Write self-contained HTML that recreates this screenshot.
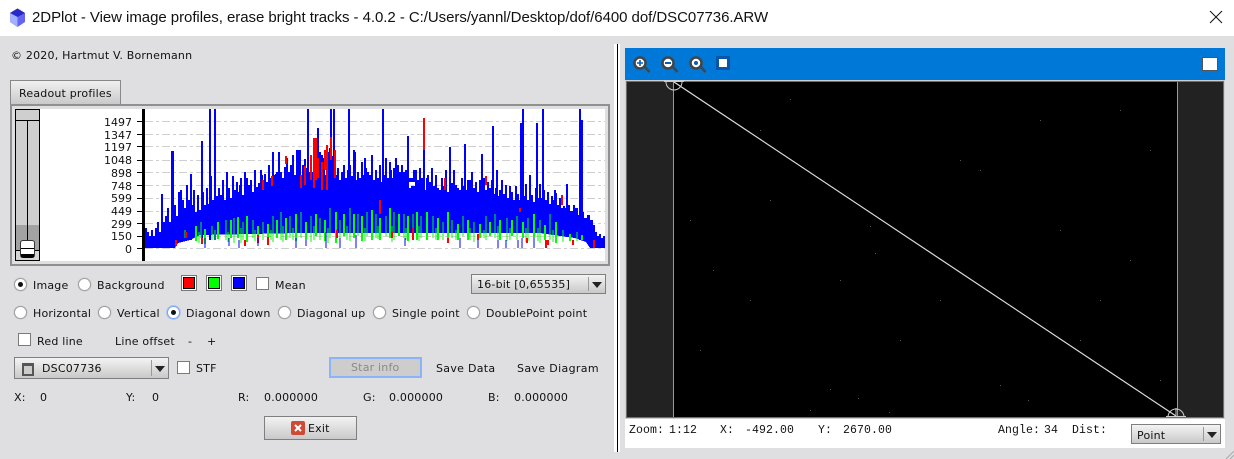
<!DOCTYPE html>
<html><head><meta charset="utf-8"><style>
html,body{margin:0;padding:0}
body{width:1234px;height:459px;overflow:hidden;background:#dfdfe1;position:relative;font-family:"DejaVu Sans","Liberation Sans",sans-serif;font-size:11px;color:#111}
.a{position:absolute;white-space:nowrap}
.t{position:absolute;white-space:nowrap;line-height:14px;letter-spacing:.2px}
.r{position:absolute;width:11px;height:11px;border-radius:50%;background:#fff;border:1px solid #a0a0a0;box-shadow:0 0 1px #999}
.r.on:after{content:"";position:absolute;left:3px;top:3px;width:5px;height:5px;border-radius:50%;background:#111}
.c{position:absolute;width:11px;height:11px;background:#fff;border:1px solid #7a7a7a}
.s{position:absolute;width:12px;height:12px;background:#fff;border:1px solid #777;padding:1px}
.s i{display:block;width:10px;height:10px;border:1px solid #000}
.g{position:absolute;box-sizing:border-box;border:1px solid #7f7f7f;background:linear-gradient(#f3f3f3,#c9c9c9)}
.ar{position:absolute;width:0;height:0;border-left:5px solid transparent;border-right:5px solid transparent;border-top:6px solid #222}
.m{position:absolute;white-space:nowrap;top:424px;font:11.5px/14px 'Liberation Mono',monospace;color:#111;letter-spacing:.1px}
</style></head><body>
<div class="a" style="left:0;top:0;width:1234px;height:36px;background:#fff"></div>
<svg class="a" style="left:9px;top:8px" width="17" height="20" viewBox="0 0 17 20"><polygon points="8.500,0.500 16,5 16,14 8.500,19 1,14 1,5" fill="#6464f0"/><polygon points="8.500,0.500 16,5 8.500,9 1,5" fill="#2828c8"/><polygon points="1,5 8.500,9 8.500,19 1,14" fill="#a2aeff"/></svg>
<div class="a" style="left:32px;top:8px;font:15px/20px 'Liberation Sans',sans-serif;letter-spacing:-.05px;color:#111">2DPlot - View image profiles, erase bright tracks - 4.0.2 - C:/Users/yannl/Desktop/dof/6400 dof/DSC07736.ARW</div>
<svg class="a" style="left:1209px;top:10px" width="14" height="14"><path d="M1 1L13 13M13 1L1 13" stroke="#111" stroke-width="1"/></svg>

<div class="t" style="left:11px;top:49px">© 2020, Hartmut V. Bornemann</div>

<div class="a" style="left:10px;top:80px;width:109px;height:24px;border:1px solid #888;border-bottom:0;background:linear-gradient(#f0f0f0,#c8c8c8)"></div>
<div class="t" style="left:19px;top:87px">Readout profiles</div>
<div class="a" style="left:10px;top:104px;width:596px;height:158px;border:2px solid #909090;background:#dfdfe1"></div>
<div class="a" style="left:40px;top:109px;width:565px;height:152px;background:#fff"></div>

<!-- slider -->
<div class="a" style="left:15px;top:109px;width:23px;height:150px;border:1px solid #000;background:#cfcfcf;overflow:hidden">
 <div class="a" style="left:0;top:115px;width:23px;height:35px;background:#a2a2a2"></div>
 <div class="a" style="left:0;top:10px;width:23px;height:1px;background:#000"></div>
 <div class="a" style="left:11px;top:10px;width:1px;height:130px;background:#000"></div>
 <div class="a" style="left:0;top:140px;width:23px;height:10px;background:#d4d4d4;border-top:1px solid #000"></div>
 <div class="a" style="left:4px;top:130px;width:15px;height:18px;box-sizing:border-box;border:1px solid #333;border-bottom:4px solid #000;border-radius:3px;background:#fff"></div>
 <div class="a" style="left:5px;top:138px;width:13px;height:1px;background:#000"></div>
</div>

<!-- chart -->
<svg class="a" style="left:0;top:0" width="620" height="270">
<clipPath id="cc"><rect x="143" y="109" width="462" height="152"/></clipPath>
<g stroke="#cfcfcf" stroke-dasharray="8 3 3 3" stroke-width="1"><path d="M145 121.5H605M145 134.5H605M145 146.5H605M145 160.5H605M145 172.5H605M145 185.5H605M145 198.5H605M145 211.5H605M145 223.5H605M145 236.5H605M145 248.5H605"/></g>
<g clip-path="url(#cc)" shape-rendering="crispEdges">
<path fill="#00f" d="M143 248V208h2V228h2V232h2V236h2V230h2V236h2V228h2V222h2V232h2V194h2V222h2V216h2V208h2V222H173V151h1V205h2V216h2V192h2V190h2V200h2V208h2V185h2V200h2V174h1V205h2V190h2V212h2V195h2V210h2V141h1V192h2V205h2V188h2V204h2V176h2V200h2V185h2V196h2V188h2V195h2V180h2V200h2V172h2V188h2V198h2V176h2V196h2V182h2V192h2V178h2V195h2V172h2V190h2V185h2V180h2V192h2V170h2V187h2V183h2V170h2V184h2V174h2V182h2V165h2V178h2V152h2V175h2V172h2V152h2V172h2V178h2V167h2V158h2V172h2V165h2V178h2V175h2V170h2V150h2V180h2V165h2V159h2V168h2V172H313V165h2V150h2V178h2V152h2V170h2V158h2V175h2V152h2V148h2V156h2V170h2V175h2V168h2V180h2V172h2V165h2V178h2V170h2V165h2V176h2V150h2V180h2V172h2V178h2V162h2V175h2V168h2V172h2V175h2V160h2V180h2V170h2V178h2V165h2V182h2V175h2V158h2V178h2V162h2V178h2V172h2V158h2V178h2V172h2V165h2V178h2V170h2V182h2V178h2V186h2V170h2V176h2V182H393V168h2V170h2V165h2V175h2V178h2V172h2V180h2V175h2V188h2V178h2V186h2V170h2V180h2V168h2V178h2V172h2V190h2V175h2V182h2V168h2V186h2V175h2V188h2V190h2V178h2V186h2V172h2V192h2V178h2V183h2V170h2V185h2V188h2V190h2V178h2V186h2V190h2V180h2V192H471V172h2V188h2V182h2V192h2V180h2V186h2V178h2V190h2V182h2V188h2V180h2V194h2V188h2V196h2V190h2V180h2V194h2V185h2V198h2V186h2V192h2V200h2V186h2V194h2V200h2V188h2V196h2V184h2V200h2V188h2V195h2V202h2V188h2V198h2V184h2V198h2V190h2V200h2V192h2V204h2V196h2V200h2V193h2V205h2V198h2V208H563V206h2V208h2V205h3V211h3V205h2V208h3V215h3V212h3V218h3V215h3V220h3V225h2V232h2V236h2V234h2V238h2V236h2V240h2V238h2V240h2V240H605V248L590 248L586 242L575 238L560 236L540 233L300 233L200 235L190 240L178 243L175 248Z"/>
<path fill="none" stroke="#00f" stroke-width="2" d="M162 240V194M172 240V151M202 240V141M191 240V174M210 240V109M215 240V109M276 220V174M293 220V155M308 220V109M331 220V109M334 220V109M349 220V109M383 220V109M408 220V136M424 220V150M450 220V147M465 220V144M482 220V154M493 220V126M521 220V123M523 220V109M537 220V123M543 220V109M580 240V109M582 240V120M567 230V184M427 225V178M300 230V150M297 230V150M318 230V128M322 230V155M355 230V152M365 230V158M372 230V155M391 230V170M446 230V170M470 230V180M497 230V170M530 230V175M555 230V190M240 230V185M247 230V178M262 230V175M287 230V163M235 230V190"/>
<path fill="none" stroke="#0f0" stroke-width="2" d="M196 226V241M205 229V244M218 222V239M231 220V238M238 217V238M247 216V242M258 226V241M268 224V238M277 220V238M286 218V240M296 214V241M306 222V240M316 214V236M325 220V241M336 212V243M344 214V236M354 214V238M362 216V241M372 210V240M380 218V240M390 208V238M399 214V236M408 216V241M417 212V240M427 212V240M438 218V240M448 212V241M458 224V240M468 220V240M480 224V238M490 222V236M500 220V240M512 220V236M523 222V238M534 214V238M545 225V240M556 222V243M570 234V241M582 235V240"/>
<path fill="none" stroke="#0f0" stroke-width="1" d="M185 230V238M201 222V238M212 226V240M226 220V240M234 218V243M243 222V240M253 220V238M263 222V240M273 216V242M281 212V240M290 216V238M301 212V238M311 216V242M320 218V240M330 208V238M340 220V240M350 208V241M358 214V236M367 212V236M376 214V238M386 216V236M394 212V240M404 214V238M413 214V236M421 216V238M433 216V238M443 222V240M452 220V238M463 216V236M474 222V242M486 216V240M495 214V238M507 218V241M517 216V240M528 218V241M540 220V243M550 214V240M563 230V242M577 232V241M199 232V243M215 230V240M228 232V242M241 228V243M255 230V241M271 230V240M283 226V242M293 228V240M314 226V240M328 228V243M347 226V240M365 228V241M378 226V239M392 226V242M406 228V240M419 226V241M436 228V240M456 230V240M470 228V240M484 230V238M498 226V241M510 228V240M526 228V242M538 228V241M553 230V242"/>
<path fill="none" stroke="#f00" stroke-width="2" d="M424 118V150M314 138V188M316 138V180M331 137V160M327 145V190M322 162V190M318 158V178M311 155V180M305 166V185M335 150V178M325 150V170M301 175V188M286 156V164M272 176V186M263 180V190M176 240V246M186 232V238M202 238V244M245 240V246M258 235V243M268 237V245M380 200V214M392 232V238M413 228V240M445 190V178M478 240V234M486 176V185M520 208V212M548 240V245M562 195V205M546 240V248M594 240V248M573 245V240M527 238V243M337 230V238M448 238V243"/>
<path fill="none" stroke="#00f" stroke-width="1" d="M239 240V248M296 238V248M306 240V246M326 232V248M340 238V248M356 235V248M405 238V246M460 238V248M478 240V248M498 240V248M506 240V248M518 240V248M522 238V248M534 238V248M205 238V248M229 238V246M258 238V246"/>
</g>
<rect x="142" y="109" width="3" height="152" fill="#000"/>
<g fill="#000"><rect x="137" y="121" width="6" height="1"/><rect x="137" y="134" width="6" height="1"/><rect x="137" y="146" width="6" height="1"/><rect x="137" y="160" width="6" height="1"/><rect x="137" y="172" width="6" height="1"/><rect x="137" y="185" width="6" height="1"/><rect x="137" y="198" width="6" height="1"/><rect x="137" y="211" width="6" height="1"/><rect x="137" y="223" width="6" height="1"/><rect x="137" y="236" width="6" height="1"/><rect x="137" y="248" width="6" height="1"/></g>
<g font-family="'DejaVu Sans',sans-serif" font-size="11" fill="#111" text-anchor="end"><text x="132" y="126">1497</text><text x="132" y="139">1347</text><text x="132" y="151">1197</text><text x="132" y="164">1048</text><text x="132" y="177">898</text><text x="132" y="190">748</text><text x="132" y="202">599</text><text x="132" y="215">449</text><text x="132" y="228">299</text><text x="132" y="240">150</text><text x="132" y="253">0</text></g>
</svg>

<!-- row 1 -->
<div class="r on" style="left:14px;top:278px"></div><div class="t" style="left:33px;top:279px">Image</div>
<div class="r" style="left:78px;top:278px"></div><div class="t" style="left:97px;top:279px">Background</div>
<div class="s" style="left:181px;top:275px"><i style="background:#f00"></i></div>
<div class="s" style="left:206px;top:275px"><i style="background:#0f0"></i></div>
<div class="s" style="left:231px;top:275px"><i style="background:#00f"></i></div>
<div class="c" style="left:256px;top:277px"></div><div class="t" style="left:275px;top:279px">Mean</div>
<div class="g" style="left:471px;top:274px;width:135px;height:20px"></div>
<div class="a" style="left:588px;top:277px;width:1px;height:14px;background:#999"></div>
<div class="ar" style="left:592px;top:282px"></div>
<div class="t" style="left:477px;top:278px">16-bit [0,65535]</div>

<!-- row 2 -->
<div class="r" style="left:14px;top:306px"></div><div class="t" style="left:33px;top:307px">Horizontal</div>
<div class="r" style="left:98px;top:306px"></div><div class="t" style="left:117px;top:307px">Vertical</div>
<div class="r on" style="left:167px;top:306px;border-color:#7aa7f0;box-shadow:0 0 0 1px #a9c6f5"></div><div class="t" style="left:186px;top:307px">Diagonal down</div>
<div class="r" style="left:278px;top:306px"></div><div class="t" style="left:297px;top:307px">Diagonal up</div>
<div class="r" style="left:373px;top:306px"></div><div class="t" style="left:392px;top:307px">Single point</div>
<div class="r" style="left:467px;top:306px"></div><div class="t" style="left:486px;top:307px">DoublePoint point</div>

<!-- row 3 -->
<div class="c" style="left:18px;top:333px"></div><div class="t" style="left:37px;top:335px">Red line</div>
<div class="t" style="left:115px;top:335px">Line offset</div>
<div class="t" style="left:188px;top:335px">-</div><div class="t" style="left:207px;top:335px">+</div>

<!-- row 4 -->
<div class="g" style="left:14px;top:357px;width:155px;height:22px"></div>
<div class="a" style="left:22px;top:363px;width:8px;height:8px;border:2px solid #555;border-top-width:3px;background:#ccc"></div>
<div class="t" style="left:42px;top:362px">DSC07736</div>
<div class="a" style="left:151px;top:360px;width:1px;height:16px;background:#999"></div>
<div class="ar" style="left:155px;top:366px"></div>
<div class="c" style="left:177px;top:361px"></div><div class="t" style="left:196px;top:362px">STF</div>
<div class="a" style="left:329px;top:357px;width:89px;height:17px;border:2px solid #8ab4fa;background:#cdcdcd"></div>
<div class="t" style="left:351px;top:361px;color:#8a8a8a">Star info</div>
<div class="t" style="left:436px;top:362px;letter-spacing:.3px">Save Data</div>
<div class="t" style="left:517px;top:362px;letter-spacing:.35px">Save Diagram</div>

<!-- row 5 -->
<div class="t" style="left:14px;top:391px">X:</div><div class="t" style="left:40px;top:391px">0</div>
<div class="t" style="left:126px;top:391px">Y:</div><div class="t" style="left:152px;top:391px">0</div>
<div class="t" style="left:238px;top:391px">R:</div><div class="t" style="left:264px;top:391px">0.000000</div>
<div class="t" style="left:363px;top:391px">G:</div><div class="t" style="left:389px;top:391px">0.000000</div>
<div class="t" style="left:488px;top:391px">B:</div><div class="t" style="left:514px;top:391px">0.000000</div>

<!-- exit -->
<div class="g" style="left:264px;top:416px;width:93px;height:24px"></div>
<svg class="a" style="left:291px;top:421px" width="14" height="14"><rect width="14" height="14" rx="2" fill="#cf4a35"/><path d="M4 4L10 10M10 4L4 10" stroke="#fff" stroke-width="2"/></svg>
<div class="t" style="left:308px;top:422px">Exit</div>

<!-- separator -->
<div class="a" style="left:614px;top:44px;width:6px;height:408px;background:#fff"></div>
<div class="a" style="left:617px;top:44px;width:1px;height:408px;background:#000"></div>

<!-- toolbar -->
<div class="a" style="left:625px;top:48px;width:600px;height:32px;background:#0078d7"></div>
<svg class="a" style="left:625px;top:48px" width="110" height="32">
<g fill="none"><circle cx="15" cy="15" r="5.500" fill="#fff" stroke="#444" stroke-width="2.500"/><path d="M20 19L24.500 24" stroke="#444" stroke-width="2.500"/><path d="M12 15H18M15 12V18" stroke="#0a5cb0" stroke-width="1.600"/>
<circle cx="43" cy="15" r="5.500" fill="#fff" stroke="#444" stroke-width="2.500"/><path d="M48 19L52.500 24" stroke="#444" stroke-width="2.500"/><path d="M40 15H46" stroke="#0a5cb0" stroke-width="2"/>
<circle cx="71" cy="15" r="5.500" fill="#fff" stroke="#444" stroke-width="2.500"/><path d="M76 19L80.500 24" stroke="#444" stroke-width="2.500"/><circle cx="71" cy="15" r="2" fill="#0a5cb0"/></g>
<rect x="91" y="8" width="14" height="14" fill="#0b55a8"/><rect x="94" y="11" width="8" height="8" fill="#fff"/></svg>
<div class="a" style="left:1202px;top:57px;width:14px;height:12px;background:#fff;border:1px solid #555"></div>

<!-- image -->
<div class="a" style="left:625px;top:80px;width:600px;height:339px;background:#cfcfcf"></div>
<svg class="a" style="left:626px;top:81px" width="598" height="337" viewBox="626 81 598 337">
<rect x="626" y="81" width="598" height="337" fill="#6e6e6e"/>
<rect x="627" y="82" width="46" height="335" fill="#222"/><rect x="1178" y="82" width="45" height="335" fill="#222"/>
<rect x="674" y="82" width="503" height="335" fill="#000"/>
<path d="M673.500 82V417M1177.500 82V417" stroke="#999"/>
<path d="M674 82L1176 416" stroke="#ddd" stroke-width="1.200"/>
<g fill="none" stroke="#ccc"><path d="M666 82A8 8 0 0 0 682 82"/><path d="M1168 417A8 8 0 0 1 1184 417"/><path d="M664 81.500H684M1166 416.500H1186M1176 408V417"/></g>
<g fill="#555"><rect x="875" y="253" width="1" height="1" fill="#a33"/><rect x="870" y="226" width="1" height="1"/><rect x="713" y="270" width="1" height="1"/><rect x="830" y="389" width="1" height="1"/><rect x="980" y="170" width="1" height="1"/><rect x="1100" y="300" width="1" height="1"/><rect x="1040" y="120" width="1" height="1"/><rect x="760" y="130" width="1" height="1"/><rect x="1150" y="150" width="1" height="1"/><rect x="900" y="340" width="1" height="1"/><rect x="960" y="160" width="1" height="1"/><rect x="700" y="350" width="1" height="1"/><rect x="750" y="300" width="1" height="1"/><rect x="1060" y="230" width="1" height="1"/><rect x="1130" y="260" width="1" height="1"/><rect x="1000" y="385" width="1" height="1"/><rect x="1028" y="400" width="1" height="1"/><rect x="810" y="410" width="1" height="1"/><rect x="889" y="412" width="1" height="1"/><rect x="858" y="398" width="1" height="1"/><rect x="770" y="200" width="1" height="1"/><rect x="1120" y="110" width="1" height="1"/><rect x="790" y="99" width="1" height="1"/><rect x="690" y="220" width="1" height="1"/><rect x="1080" y="340" width="1" height="1"/><rect x="1160" y="380" width="1" height="1"/><rect x="940" y="300" width="1" height="1"/><rect x="840" y="280" width="1" height="1"/></g>
</svg>

<!-- status -->
<div class="a" style="left:625px;top:419px;width:600px;height:29px;background:#fff"></div>
<div class="m" style="left:629px">Zoom:</div>
<div class="m" style="left:669px">1:12</div>
<div class="m" style="left:720px">X:</div>
<div class="m" style="left:745px">-492.00</div>
<div class="m" style="left:818px">Y:</div>
<div class="m" style="left:843px">2670.00</div>
<div class="m" style="left:998px">Angle:</div>
<div class="m" style="left:1044px">34</div>
<div class="m" style="left:1072px">Dist:</div>
<div class="g" style="left:1131px;top:424px;width:90px;height:20px"></div>
<div class="a" style="left:1203px;top:427px;width:1px;height:14px;background:#999"></div>
<div class="ar" style="left:1207px;top:432px"></div>
<div class="t" style="left:1137px;top:429px">Point</div>
<svg class="a" style="left:1226px;top:451px" width="8" height="8"><path d="M0 8L8 0M4 8L8 4" stroke="#aaa"/></svg>
</body></html>
